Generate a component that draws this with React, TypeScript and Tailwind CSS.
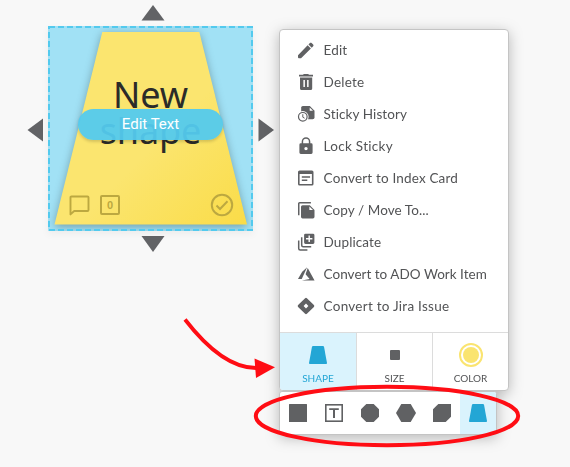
import type { ReactNode } from 'react';

const ACTIONS: { label: string; spacing: string; icon: ReactNode }[] = [
  {
    label: 'Edit',
    spacing: 'tracking-[0.15px]',
    icon: (
      <path
        transform="translate(-1.6 -1.1) scale(.87)"
        d="M3 17.5V20q0 1 1 1h2.5L17.81 9.94l-3.75-3.75L3 17.5zM20.4 7.35c.6-.6.6-1.4 0-2l-1.75-1.75c-.6-.6-1.4-.6-2 0l-1.6 1.6 3.75 3.75z"
      />
    ),
  },
  {
    label: 'Delete',
    spacing: 'tracking-[0.2px]',
    icon: (
      <path
        fillRule="evenodd"
        d="M2 1.7h4l.8-.8h4.4l.8.8h4v1.9H2zM3 4.6h12.2v10.9q0 1.6-1.6 1.6H4.6Q3 17.100 3 15.500zM6.400 7v6.900h1.500V7zM10.100 7v6.900h1.500V7z"
      />
    ),
  },
  {
    label: 'Sticky History',
    spacing: 'tracking-[0.1px]',
    icon: (
      <>
        <path d="M5.800 1h7l4.700 4.700v6.800q0 1.800-1.800 1.800H4.200V2.600Q4.200 1 5.800 1z" />
        <path d="M12.700 2.400v3.300h3.300z" fill="white" />
        <circle cx="5.800" cy="11.800" r="5.800" fill="white" />
        <circle cx="5.800" cy="11.800" r="4.300" fill="none" stroke="currentColor" strokeWidth="1.200" />
        <path d="M5.800 9.200v3l1.800 1" fill="none" stroke="currentColor" />
      </>
    ),
  },
  {
    label: 'Lock Sticky',
    spacing: 'tracking-[0.28px]',
    icon: (
      <>
        <path d="M5.400 7V4.700a3.600 3.600 0 0 1 7.200 0V7" fill="none" stroke="currentColor" strokeWidth="1.500" />
        <path
          fillRule="evenodd"
          d="M3.800 6.300h10.400q1.400 0 1.400 1.400v7.900q0 1.400-1.400 1.400H3.800q-1.400 0-1.400-1.400V7.700q0-1.400 1.400-1.400zM9 9.900a1.700 1.700 0 1 0 0 3.400 1.700 1.700 0 0 0 0-3.400z"
        />
      </>
    ),
  },
  {
    label: 'Convert to Index Card',
    spacing: 'tracking-[0.17px]',
    icon: (
      <>
        <path
          fillRule="evenodd"
          d="M2.600 1.400h12.300q1.600 0 1.600 1.600v12q0 1.600-1.600 1.600H2.600Q1 16.600 1 15V3q0-1.600 1.600-1.600zM2.600 5v10h12.300V5z"
        />
        <path d="M4.800 7.200h8.300v1.500H4.800zM4.800 10.400h5.500v1.500H4.800z" />
      </>
    ),
  },
  {
    label: 'Copy / Move To...',
    spacing: 'tracking-[0.08px]',
    icon: (
      <>
        <path d="M1 14.300V2.600Q1 1 2.600 1h11.300v1.500H2.500v11.800z" />
        <path d="M5.600 4.200h7.200l4.700 4.700v6.900q0 1.600-1.600 1.600H5.600Q4 17.400 4 15.800v-10q0-1.600 1.600-1.600z" />
        <path d="M12.400 5.500v3.600h3.600z" fill="white" />
      </>
    ),
  },
  {
    label: 'Duplicate',
    spacing: 'tracking-[0.1px]',
    icon: (
      <>
        <path
          fillRule="evenodd"
          d="M8.500.700h7.500q1.400 0 1.400 1.400v7.500q0 1.400-1.400 1.400H8.500Q7.100 11 7.100 9.600V2.100Q7.100.700 8.500.700zM11.500 2.600v2.500H9v1.400h2.500V9h1.400V6.500h2.500V5.100h-2.500V2.600z"
        />
        <path
          d="M4.700 4.200v8.100q0 1.500 1.500 1.500h8M1.700 7.400v8q0 1.500 1.500 1.500h7.200"
          fill="none"
          stroke="currentColor"
          strokeWidth="1.500"
        />
      </>
    ),
  },
  {
    label: 'Convert to ADO Work Item',
    spacing: 'tracking-[0.02px]',
    icon: (
      <path
        transform="translate(-.7 -.9) scale(.83)"
        d="M13.050 3.700 6.560 18.050 2 18 7.090 9.240zM13.750 4.600 22 19.760H6.740l9.300-1.660-4.870-5.790z"
      />
    ),
  },
  {
    label: 'Convert to Jira Issue',
    spacing: 'tracking-[0.26px]',
    icon: (
      <path
        fillRule="evenodd"
        d="M8.100 1.200q.900-.900 1.800 0l7 6.900q.900.900 0 1.800l-7 6.900q-.900.900-1.800 0l-7-6.900q-.900-.900 0-1.800zM9 6.600 6.600 9 9 11.400 11.400 9z"
      />
    ),
  },
];

const SHAPES: { name: string; icon: ReactNode }[] = [
  { name: 'square', icon: <rect width="18" height="18" rx=".5" /> },
  {
    name: 'text',
    icon: (
      <>
        <rect x=".8" y=".8" width="16.400" height="16.400" fill="none" stroke="currentColor" strokeWidth="1.600" />
        <path d="M4.200 4.200h9.600v1.900H10v8H8v-8H4.200z" />
      </>
    ),
  },
  { name: 'octagon', icon: <path d="M5.300 0h7.400L18 5.300v7.400L12.700 18H5.300L0 12.700V5.300z" /> },
  { name: 'hexagon', icon: <path d="M4.300 0h9.400L19 9l-5.300 9H4.300L-1 9z" /> },
  { name: 'clipped', icon: <path d="M5.300 0H18v12.700L12.700 18H0V5.300z" /> },
  { name: 'trapezoid', icon: <path d="M4 0h10q.8 0 1 .8L18 17q.1 1-.8 1H.8q-.9 0-.8-1L3 .8Q3.200 0 4 0z" /> },
];

function Note() {
  return (
    <div className="relative h-[205px] w-[205px] bg-[#a1e1f5] shadow-[0_3px_8px_rgba(0,0,0,0.05)]">
      <svg className="absolute inset-0" width="205" height="205">
        <defs>
          <linearGradient id="paper" x1="0" y1="0" x2="1" y2="1">
            <stop offset=".55" stopColor="#fbe56f" />
            <stop offset="1" stopColor="#fadc48" />
          </linearGradient>
          <filter id="lift" x="-10%" y="-10%" width="120%" height="120%" colorInterpolationFilters="sRGB">
            <feDropShadow dx="0" dy="2" stdDeviation="4" floodOpacity=".3" />
          </filter>
          <clipPath id="noteArea">
            <rect width="205" height="205" />
          </clipPath>
        </defs>
        <g clipPath="url(#noteArea)">
          <path d="M54.300 6h97L199 198.500H6.500z" fill="url(#paper)" filter="url(#lift)" />
        </g>
        <rect
          x="1"
          y="1"
          width="203"
          height="203"
          fill="none"
          stroke="#53caee"
          strokeWidth="2"
          strokeDasharray="6 3"
        />
      </svg>
      <div className="relative pt-[51px] text-center font-['Noto_Sans','Open_Sans',sans-serif] text-[36px] leading-[36px] tracking-[-0.1px] text-[#2b2b29]">
        New
        <br />
        shape
      </div>
      <button className="absolute top-[83px] left-[30px] h-[31px] w-[145px] rounded-full bg-[#53caee]/95 pb-px font-['Roboto',sans-serif] text-[15px] leading-[30px] text-white shadow-[0_2px_3px_rgba(0,0,0,0.15)]">
        Edit Text
      </button>
      <div className="relative mt-[44px] flex items-center pl-[21px] text-[#bca840]">
        <svg width="21" height="21" fill="none" stroke="currentColor" strokeWidth="1.900" strokeLinejoin="round">
          <path d="M1.500 2.500q0-1 1-1h16q1 0 1 1V15q0 1-1 1H5.200l-3.700 3.400z" />
        </svg>
        <div className="ml-[10px] flex h-5 w-5 items-center justify-center rounded-[2px] border-2 border-current font-['Liberation_Sans',sans-serif] text-[11px] font-bold leading-none">
          0
        </div>
        <svg className="ml-[90px]" width="24" height="24" fill="none" stroke="currentColor" strokeWidth="2">
          <circle cx="12" cy="12" r="10.200" />
          <path d="m6.500 12.500 3.500 3.500 7.500-7.700" />
        </svg>
      </div>
    </div>
  );
}

function ContextMenu() {
  return (
    <div className="flex flex-col items-start font-['Lato',sans-serif] text-[#525355]">
      <div className="relative z-10 h-[362px] w-[230px] overflow-hidden rounded-[4px] border border-[#c4c4c4] bg-white">
        <div className="flex h-[302px] flex-col pt-1">
          {ACTIONS.map((a) => (
            <div key={a.label} className="flex h-8 shrink-0 items-center pl-[17px]">
              <svg width="18" height="18" className="shrink-0 overflow-visible text-[#606163]" fill="currentColor">
                {a.icon}
              </svg>
              <span className={`ml-[8.6px] whitespace-nowrap text-[13.5px] leading-8 ${a.spacing}`}>{a.label}</span>
            </div>
          ))}
        </div>
        <div className="grid h-[59px] grid-cols-[77px_76px_75px] border-t border-[#dcdcdc] text-[10px] leading-3">
          <div className="flex flex-col items-center border-r border-[#dcdcdc] bg-[#daf3fd] text-[#23a6d5]">
            <svg width="18" height="18" fill="currentColor" className="mt-[13px]">
              {SHAPES[5].icon}
            </svg>
            <span className="mt-[8px]">SHAPE</span>
          </div>
          <div className="flex flex-col items-center border-r border-[#dcdcdc]">
            <div className="mt-[17px] h-[10px] w-[10px] rounded-[1px] bg-[#606163]" />
            <span className="mt-[12px]">SIZE</span>
          </div>
          <div className="flex flex-col items-center">
            <div className="mt-[10px] flex h-6 w-6 items-center justify-center rounded-full border-2 border-[#fae470]">
              <div className="h-4 w-4 rounded-full bg-[#fae470]" />
            </div>
            <span className="mt-[5px]">COLOR</span>
          </div>
        </div>
      </div>
      <div className="flex h-[44px] w-[218px] overflow-hidden rounded-[3px] border border-[#c4c4c4] bg-white">
        {SHAPES.map((s) => (
          <div
            key={s.name}
            className={
              s.name === 'trapezoid'
                ? 'flex w-9 items-center justify-center bg-[#daf3fd] text-[#23a6d5]'
                : 'flex w-9 items-center justify-center text-[#606163]'
            }
          >
            <svg width="18" height="18" fill="currentColor" className="overflow-visible">
              {s.icon}
            </svg>
          </div>
        ))}
      </div>
    </div>
  );
}

export default function App() {
  return (
    <div className="relative flex h-[467px] w-[570px] items-start overflow-hidden bg-[#f8f8f8]">
      <div className="ml-[27px] flex w-[247px] shrink-0 flex-col items-center gap-[5px] pt-[5px] text-[#626366]">
        <svg className="ml-1" width="24" height="16" fill="currentColor">
          <path d="M12 0 23.500 15.500H.5z" />
        </svg>
        <div className="flex items-center gap-[5px]">
          <svg className="mt-[3px]" width="16" height="24" fill="currentColor">
            <path d="M.5 12 16 .5v23z" />
          </svg>
          <Note />
          <svg className="mt-[3px]" width="16" height="24" fill="currentColor">
            <path d="M16 12 .5.5v23z" />
          </svg>
        </div>
        <svg className="ml-1" width="24" height="16" fill="currentColor">
          <path d="M12 16 23.500 0H.5z" />
        </svg>
      </div>
      <div className="ml-[5px] pt-[29px] drop-shadow-[0_3px_7px_rgba(0,0,0,0.26)]">
        <ContextMenu />
      </div>
      <svg className="pointer-events-none absolute inset-0 z-20" width="570" height="467" fill="none" stroke="#ff0d14">
        <path d="M185 319.500C207 348 231 368 256 368" strokeWidth="3.800" />
        <path d="M254.500 358.500 275 367.200 256 378z" fill="#ff0d14" stroke="none" />
        <ellipse cx="387" cy="416" rx="131.200" ry="29.200" strokeWidth="4" />
      </svg>
    </div>
  );
}
